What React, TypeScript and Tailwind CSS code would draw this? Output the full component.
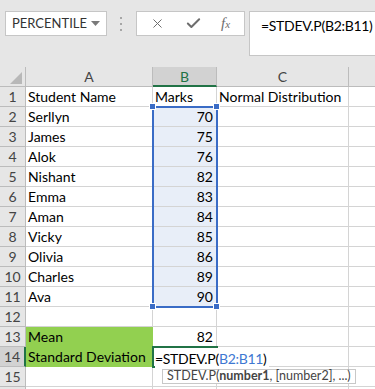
import { X, Check } from "lucide-react";

const FONT = { fontFamily: "Lato, 'Liberation Sans', sans-serif" };

const rows: [string, string][] = [
  ["Student Name", "Marks"],
  ["Serllyn", "70"],
  ["James", "75"],
  ["Alok", "76"],
  ["Nishant", "82"],
  ["Emma", "83"],
  ["Aman", "84"],
  ["Vicky", "85"],
  ["Olivia", "86"],
  ["Charles", "89"],
  ["Ava", "90"],
  ["", ""],
  ["Mean", "82"],
  ["Standard Deviation", ""],
  ["", ""],
  ["", ""],
];

function Toolbar() {
  return (
    <div className="flex h-[67px] items-start bg-[#e6e6e6] pt-[11px]">
      <div className="ml-[5px] flex h-[25px] w-[102px] items-center justify-between border border-[#c6c6c6] bg-white pl-[6px] pr-[6px] text-[13px] text-[#333]">
        <span>PERCENTILE</span>
        <svg width="9" height="5" viewBox="0 0 9 5">
          <polygon points="0,0 9,0 4.5,5" fill="#7a7a7a" />
        </svg>
      </div>
      <div className="ml-[13px] flex h-[25px] flex-col justify-center gap-[4px]">
        <div className="h-[2px] w-[2px] bg-[#a6a6a6]" />
        <div className="h-[2px] w-[2px] bg-[#a6a6a6]" />
        <div className="h-[2px] w-[2px] bg-[#a6a6a6]" />
      </div>
      <div className="ml-[14px] flex h-[25px] w-[109px] items-center border border-[#c6c6c6] bg-white text-[#6d6d6d]">
        <X size={15} strokeWidth={1.6} className="ml-[13px]" />
        <Check size={17} strokeWidth={2.8} className="ml-[20px]" />
        <span
          className="ml-[19px] text-[15px] italic"
          style={{ fontFamily: "'Liberation Serif', serif" }}
        >
          f<span className="text-[11px]">x</span>
        </span>
      </div>
      <div className="ml-[4px] h-[45px] flex-1 border border-r-0 border-[#c6c6c6] bg-white pl-[11px] pt-[3px] text-[14px] tracking-[-0.3px] text-black">
        =STDEV.P(B2:B11)
      </div>
    </div>
  );
}

export default function App() {
  return (
    <div className="h-[389px] w-[375px] overflow-hidden bg-white" style={FONT}>
      <Toolbar />
      <div className="relative">
        <div className="grid grid-cols-[26px_127px_64px_132px_1fr] text-[14px]">
          {/* header row */}
          <div className="relative h-[20px] border-r border-b border-[#bcbcbc] bg-[#e6e6e6]">
            <svg className="absolute left-[10px] top-[5px]" width="12" height="12" viewBox="0 0 12 12">
              <polygon points="12,0 12,12 0,12" fill="#b8b8b8" />
            </svg>
          </div>
          <div className="flex h-[20px] items-center justify-center border-r border-b border-[#bcbcbc] bg-[#e6e6e6] text-[#444]">A</div>
          <div className="flex h-[20px] items-center justify-center border-r border-b-2 border-r-[#bcbcbc] border-b-[#217346] bg-[#d2d2d2] text-[#217346]">B</div>
          <div className="flex h-[20px] items-center justify-center border-r border-b border-[#bcbcbc] bg-[#e6e6e6] text-[#444]">C</div>
          <div className="h-[20px] border-b border-[#bcbcbc] bg-[#e6e6e6]" />

          {rows.map(([a, b], i) => {
            const n = i + 1;
            const sel = n >= 2 && n <= 11;
            const green = n === 13 || n === 14;
            const active = n === 14;
            return [
              <div
                key={`h${n}`}
                className={`flex h-[20px] items-center justify-center border-b border-r text-[14px] text-[#444] ${
                  active ? "border-b-[#bcbcbc] border-r-2 border-r-[#217346] bg-[#d2d2d2]" : "border-[#bcbcbc] bg-[#e6e6e6]"
                }`}
              >
                {n < 16 ? n : ""}
              </div>,
              <div
                key={`a${n}`}
                className={`flex h-[20px] items-center whitespace-nowrap border-b border-r pl-[2px] text-black ${
                  green ? "border-[#92d050] bg-[#92d050]" : "border-[#d4d4d4]"
                }`}
              >
                {a}
              </div>,
              <div
                key={`b${n}`}
                className={`relative flex h-[20px] items-center border-b border-r border-[#d4d4d4] text-black ${
                  sel ? "justify-end bg-[#e8eef8] pr-[3px]" : n === 1 ? "pl-[2px]" : "justify-end pr-[3px]"
                }`}
              >
                {n === 14 ? (
                  <span className="absolute left-[2px] top-[1px] z-20 whitespace-nowrap bg-white pr-[2px] tracking-[-0.3px]">
                    =STDEV.P(<span className="text-[#3e78d2]">B2:B11</span>)
                  </span>
                ) : (
                  b
                )}
              </div>,
              <div
                key={`c${n}`}
                className="flex h-[20px] items-center whitespace-nowrap border-b border-r border-[#d4d4d4] pl-[2px] text-black"
              >
                {n === 1 ? "Normal Distribution" : ""}
              </div>,
              <div key={`d${n}`} className="h-[20px] border-b border-[#d4d4d4]" />,
            ];
          })}
        </div>

        {/* range reference highlight B2:B11 */}
        <div className="pointer-events-none absolute left-[152px] top-[39px] z-10 h-[202px] w-[66px] border-2 border-[#3a6cc6]" />
        {[
          "left-[149px] top-[36px]",
          "left-[213px] top-[36px]",
          "left-[149px] top-[236px]",
          "left-[213px] top-[236px]",
        ].map((p) => (
          <div key={p} className={`absolute z-10 h-[7px] w-[7px] border border-white bg-[#3a6cc6] ${p}`} />
        ))}

        {/* active cell B14 */}
        <div className="pointer-events-none absolute left-[152px] top-[279px] z-10 h-[22px] w-[66px] border-2 border-[#217346]" />

        {/* function tooltip */}
        <div className="absolute left-[162px] top-[302px] z-30 flex h-[15px] items-center whitespace-nowrap border border-[#c8c8c8] bg-white px-[4px] text-[12.5px] text-[#444]">
          STDEV.P(<b className="font-bold">number1</b>, [number2], ...)
        </div>
      </div>
    </div>
  );
}
